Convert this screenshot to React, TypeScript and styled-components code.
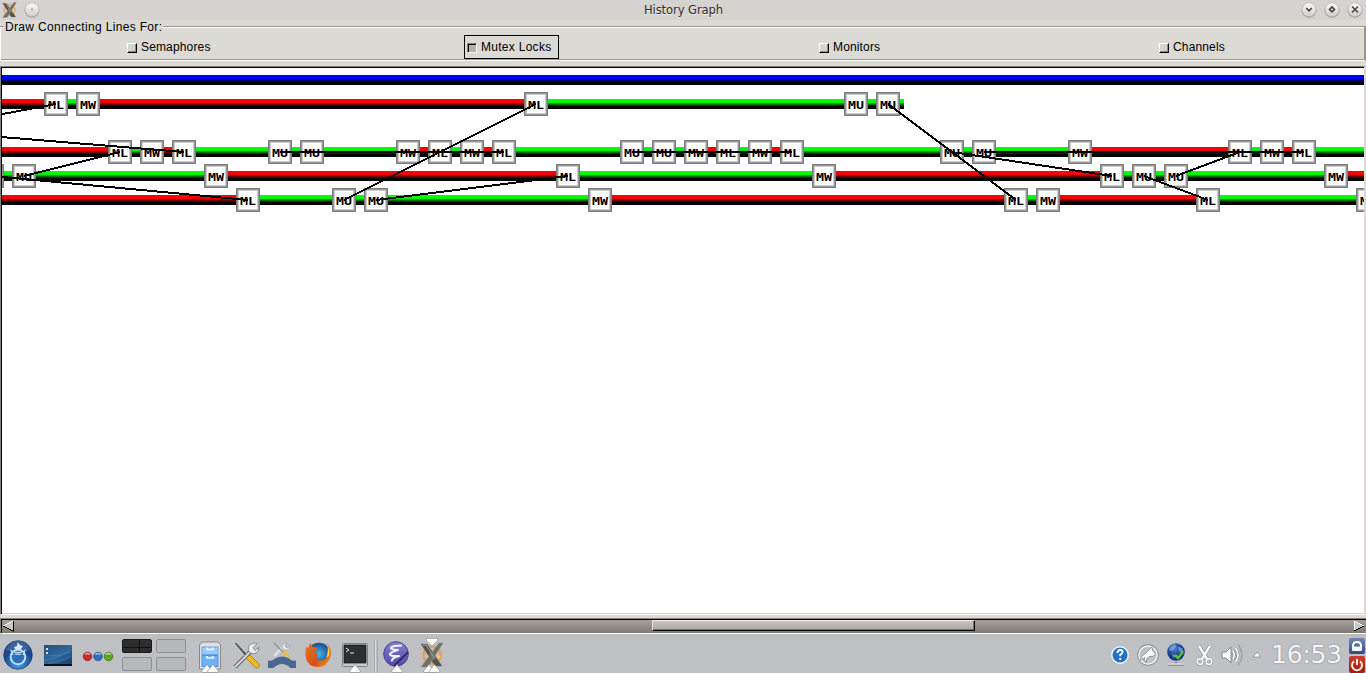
import React from "react";
import styled, { createGlobalStyle } from "styled-components";

const Global = createGlobalStyle`
  * { box-sizing: border-box; }
  html, body { margin: 0; padding: 0; overflow: hidden; background: #dbdad5; }
  svg { display: block; }
`;

const Screen = styled.div`
  width: 1366px;
  height: 673px;
  display: flex;
  flex-direction: column;
  overflow: hidden;
  background: #dbdad5;
  color: #000;
  font-family: "Liberation Sans", Arial, sans-serif;
  font-size: 12px;
`;

/* ---------- title bar ---------- */

const TitleBar = styled.header`
  height: 20px;
  flex: none;
  display: grid;
  grid-template-columns: 1fr auto 1fr;
  align-items: center;
  background: #d6d2d0;
`;

const TitleSide = styled.div<{ $end?: boolean }>`
  display: flex;
  justify-content: ${(p) => (p.$end ? "flex-end" : "flex-start")};
  gap: 7px;
  padding: ${(p) => (p.$end ? "0 3px 0 0" : "0 0 0 2px")};
`;

const TitleText = styled.h1`
  margin: 0;
  padding-left: 1px;
  font: 11.5px/20px "DejaVu Sans", sans-serif;
  letter-spacing: -0.05px;
  color: #2b2a29;
  text-shadow: 0 1px 0 #f2f0ef;
`;

/* ---------- option group ---------- */

const Options = styled.section`
  height: 46px;
  flex: none;
  display: flex;
  flex-direction: column;
`;

const Legend = styled.div`
  height: 14px;
  display: flex;
  align-items: flex-start;
  line-height: 14px;
  letter-spacing: 0.33px;
  white-space: nowrap;
`;

const Rule = styled.span<{ $w?: string }>`
  flex: ${(p) => (p.$w ? `0 0 ${p.$w}` : "1")};
  height: 2px;
  margin-top: 6px;
  background: linear-gradient(#99968e 50%, #fff 50%);
`;

const LegendText = styled.span`
  width: 159px;
  flex: none;
  padding-left: 1px;
`;

const CheckRow = styled.div`
  height: 34px;
  display: flex;
  margin-top: -7px;
  padding-top: 8px;
  border-left: 1px solid #fff;
  border-right: 2px solid #99968e;
  border-bottom: 1px solid #fff;
  box-shadow: inset 0 -1px 0 #99968e;
`;

const CheckItem = styled.label<{ $lead: number; $width: number; $active?: boolean }>`
  margin-left: ${(p) => p.$lead}px;
  width: ${(p) => p.$width}px;
  height: 24px;
  flex: none;
  display: flex;
  align-items: center;
  gap: 4px;
  padding-left: 2px;
  border: 1px solid ${(p) => (p.$active ? "#000" : "transparent")};
  letter-spacing: ${(p) => (p.$active ? 0.28 : 0.15)}px;
  white-space: nowrap;
`;

const CheckBox = styled.span<{ $on?: boolean }>`
  width: 10px;
  height: 10px;
  margin-top: 2px;
  flex: none;
  border: 1px solid;
  border-color: ${(p) => (p.$on ? "#85817a #f2f1ee #f2f1ee #85817a" : "#fff #000 #000 #fff")};
  background: ${(p) => (p.$on ? "#b6b0a5" : "#d6d4cf")};
  box-shadow: ${(p) => (p.$on ? "inset 1px 1px 0 #000" : "inset -1px -1px 0 #8d8a83")};
`;

/* ---------- graph viewport ---------- */

const Viewport = styled.main`
  height: 549px;
  flex: none;
  overflow: hidden;
  background: #fff;
  border-left: 1px solid #85827c;
  border-top: 1px solid #85827c;
  border-right: 2px solid #dbdad5;
  border-bottom: 1px solid #fff;
  box-shadow: inset 1px 1px 0 #000, inset 0 -1px 0 #d0d0cb;
  padding: 1px 0 0 1px;
`;

type Colour = "red" | "green" | "blue";
type Mark = [number, string];
interface Thread {
  y: number;
  bars: [number, number, Colour][];
  marks: Mark[];
}

const END = 1364;

const threads: Thread[] = [
  { y: 80, bars: [[0, END, "blue"]], marks: [] },
  {
    y: 104,
    bars: [[0, 56, "red"], [56, 88, "green"], [88, 536, "red"], [536, 904, "green"]],
    marks: [[56, "ML"], [88, "MW"], [536, "ML"], [856, "MU"], [888, "MU"]],
  },
  {
    y: 152,
    bars: [
      [0, 120, "red"], [120, 152, "green"], [152, 184, "red"], [184, 408, "green"],
      [408, 440, "red"], [440, 472, "green"], [472, 504, "red"], [504, 696, "green"],
      [696, 728, "red"], [728, 760, "green"], [760, 792, "red"], [792, 1080, "green"],
      [1080, 1240, "red"], [1240, 1272, "green"], [1272, 1304, "red"], [1304, END, "green"],
    ],
    marks: [
      [120, "ML"], [152, "MW"], [184, "ML"], [280, "MU"], [312, "MU"], [408, "MW"],
      [440, "ML"], [472, "MW"], [504, "ML"], [632, "MU"], [664, "MU"], [696, "MW"],
      [728, "ML"], [760, "MW"], [792, "ML"], [952, "MU"], [984, "MU"], [1080, "MW"],
      [1240, "ML"], [1272, "MW"], [1304, "ML"],
    ],
  },
  {
    y: 176,
    bars: [
      [0, 216, "green"], [216, 568, "red"], [568, 824, "green"], [824, 1112, "red"],
      [1112, 1336, "green"], [1336, END, "red"],
    ],
    marks: [
      [-8, ""], [24, "MU"], [216, "MW"], [568, "ML"], [824, "MW"], [1112, "ML"],
      [1144, "MU"], [1176, "MU"], [1336, "MW"],
    ],
  },
  {
    y: 200,
    bars: [
      [0, 248, "red"], [248, 600, "green"], [600, 1016, "red"], [1016, 1048, "green"],
      [1048, 1208, "red"], [1208, END, "green"],
    ],
    marks: [
      [248, "ML"], [344, "MU"], [376, "MU"], [600, "MW"], [1016, "ML"], [1048, "MW"],
      [1208, "ML"], [1368, "MU"],
    ],
  },
];

const links: [number, number, number, number][] = [
  [-40, 122, 56, 104],
  [-72, 131, 184, 152],
  [24, 176, 120, 152],
  [-8, 176, 248, 200],
  [280, 152, 504, 152],
  [344, 200, 536, 104],
  [376, 200, 568, 176],
  [632, 152, 792, 152],
  [888, 104, 1016, 200],
  [952, 152, 1112, 176],
  [984, 152, 1304, 152],
  [1144, 176, 1208, 200],
  [1176, 176, 1240, 152],
];

const MarkText = styled.text`
  font-family: "DejaVu Sans Mono", monospace;
  font-weight: 700;
  font-size: 10px;
  fill: #000;
`;

const shades: [string, number][] = [
  ["0%", 1], ["30%", 1], ["30%", 0.92], ["40%", 0.92], ["40%", 0.66], ["50%", 0.66],
  ["50%", 0.44], ["60%", 0.44], ["60%", 0.2], ["70%", 0.2], ["70%", 0], ["100%", 0],
];

const tint = (c: Colour, k: number) => {
  const v = Math.round(255 * k);
  return c === "red" ? `rgb(${v},0,0)` : c === "green" ? `rgb(0,${v},0)` : `rgb(0,0,${v})`;
};

const HistoryGraph = () => (
  <svg width="1362" height="545" viewBox="2 68 1362 545">
    <defs>
      {(["red", "green", "blue"] as Colour[]).map((c) => (
        <linearGradient key={c} id={`bar-${c}`} x1="0" y1="0" x2="0" y2="1">
          {shades.map(([o, k], i) => (
            <stop key={i} offset={o} stopColor={tint(c, k)} />
          ))}
        </linearGradient>
      ))}
    </defs>
    {threads.map((t) => (
      <g key={t.y} shapeRendering="crispEdges">
        {t.bars.map(([a, b, c]) => (
          <rect key={a} x={a} y={t.y - 5} width={b - a} height="10" fill={`url(#bar-${c})`} />
        ))}
        {t.marks.map(([x, label]) => (
          <g key={x}>
            <rect x={x - 12} y={t.y - 12} width="24" height="24" fill="#7c7c7c" />
            <rect x={x - 11} y={t.y - 11} width="22" height="22" fill="#999" />
            <rect x={x - 10} y={t.y - 10} width="20" height="20" fill="#cbcbcb" />
            <rect x={x - 9} y={t.y - 9} width="18" height="18" fill="#fff" />
            {label && (
              <MarkText x={x - 8} y={t.y + 5} textLength="16" lengthAdjust="spacingAndGlyphs">
                {label}
              </MarkText>
            )}
          </g>
        ))}
      </g>
    ))}
    <g stroke="#000" strokeWidth="2" shapeRendering="crispEdges">
      {links.map(([x1, y1, x2, y2]) => (
        <line key={`${x1}-${y1}`} x1={x1} y1={y1} x2={x2} y2={y2} />
      ))}
    </g>
  </svg>
);

/* ---------- scroll bar ---------- */

const ScrollBar = styled.div`
  height: 16px;
  margin-top: 3px;
  flex: none;
  display: flex;
  justify-content: space-between;
  border-top: 1px solid #85827c;
  border-bottom: 1px solid #fff;
  border-left: 1px solid #85827c;
  box-shadow: inset 0 1px 0 #000, inset 1px 0 0 #000;
  background: linear-gradient(#aaa49e, #7e7a72);
  padding-top: 1px;
`;

const Thumb = styled.div`
  width: 323px;
  height: 11px;
  margin-left: 637px;
  margin-right: auto;
  background: linear-gradient(#c9c6c3, #a7a6a1);
  border: 1px solid;
  border-color: #f1ecee #000 #000 #ddd;
  box-shadow: inset -1px -1px 0 #75766f;
`;

/* ---------- task bar ---------- */

const TaskBar = styled.footer`
  height: 39px;
  flex: none;
  display: flex;
  justify-content: space-between;
  background: linear-gradient(#b9bbbc, #bec0c3 5px, #c0c1c5);
`;

const TaskGroup = styled.div`
  display: flex;
  flex: none;
`;

const Glyph = styled.svg<{ $gap?: number }>`
  height: 39px;
  flex: none;
  margin-left: ${(p) => p.$gap ?? 0}px;
  overflow: visible;
`;

const Pager = styled.div`
  display: grid;
  grid-template-columns: 30px 30px;
  grid-template-rows: 14px 14px;
  gap: 4px;
  margin: 5px 0 0 9px;
`;

const Desk = styled.span<{ $current?: boolean }>`
  border: 1px solid ${(p) => (p.$current ? "#1a1a1a" : "#8c8e90")};
  border-radius: 2px;
  background: ${(p) =>
    p.$current
      ? "linear-gradient(#111,#111) 16px 0/1px 100% no-repeat, linear-gradient(#111,#111) 0 7px/100% 1px no-repeat, #2d2d2d"
      : "#b7b9bb"};
`;

const Clock = styled.time`
  width: 78px;
  margin-left: 9px;
  font: 25px/41px "DejaVu Sans", sans-serif;
  letter-spacing: -0.25px;
  color: #f6f6f6;
  text-shadow: 0 0 2px #85878a, 0 0 1px #97999c;
`;

const SessionButtons = styled.div`
  width: 17px;
  display: flex;
  flex-direction: column;
  gap: 2px;
  padding-top: 4px;
`;

const SessionButton = styled.span<{ $red?: boolean }>`
  height: ${(p) => (p.$red ? 17 : 16)}px;
  width: 16px;
  border-radius: 2px;
  background: ${(p) =>
    p.$red ? "linear-gradient(#c8402f, #a5180d)" : "linear-gradient(#7289b0, #2c4d82)"};
`;

const Window = ({ x, y }: { x: number; y: number }) => (
  <path d={`M${x} ${y}l5.5 -6.5 5.5 6.5q0 1.5-1.5 1.5h-8q-1.5 0-1.5-1.5z`} fill="#fff" stroke="#8b8b8b" strokeWidth=".7" />
);

const XLogo = () => (
  <>
    <circle cx="12" cy="12" r="8.5" fill="none" stroke="#ef9440" strokeWidth="2.5" opacity=".75" />
    <path d="M17 11l4 3-4 3" fill="#f5cf55" />
    <path d="M1 1h6l15 22h-7z" fill="#56534c" stroke="#75716a" strokeWidth=".5" />
    <path d="M19 0h4L8 24H1z" fill="#746f65" stroke="#999286" strokeWidth=".6" />
    <path d="M3 2h3l9 14" fill="none" stroke="#aaa69b" />
  </>
);

const WinButton = ({ kind }: { kind: "dot" | "down" | "max" | "close" }) => (
  <svg width="16" height="18" viewBox="0 0 16 18">
    <circle cx="8" cy="9.3" r="7.5" fill="#a5a29f" />
    <circle cx="8" cy="8.700" r="6.900" fill="url(#btnFace)" stroke="#b8b5b2" strokeWidth=".6" />
    {kind === "dot" && <circle cx="8" cy="8.500" r=".9" fill="#8d8b88" />}
    {kind === "down" && <path d="M5.200 7l2.800 2.800L10.800 7" fill="none" stroke="#444" strokeWidth="1.600" />}
    {kind === "max" && <path d="M8 5.900l2.500 2.500L8 10.900 5.500 8.400z" fill="none" stroke="#444" strokeWidth="1.500" />}
    {kind === "close" && <path d="M5 5.500l6 6M11 5.500l-6 6" stroke="#444" strokeWidth="1.500" />}
  </svg>
);

const Launchers = () => (
  <TaskGroup>
    <Glyph width="30" viewBox="0 0 30 39" $gap={3}>
      <circle cx="15" cy="21" r="14.3" fill="url(#menuBlue)" stroke="#1a3972" strokeWidth=".7" />
      <path d="M3 16q3-9 12-9t12 9q-12 4-24 0z" fill="#fff" opacity=".14" />
      <circle cx="15" cy="23" r="7.300" fill="#2c6fb9" stroke="#bfe0f8" strokeWidth="2" />
      <path d="M7 15l4 3h8l4-3-2 6H9z" fill="#bfe0f8" />
      <path d="M10 18q5 3 10 0v3q-5-2-10 0z" fill="#2c6fb9" />
      <path d="M11 13l3-1 .5-4L17 11l3 1-2 3h-6z" fill="#d4ebfa" />
    </Glyph>
    <Glyph width="28" viewBox="0 0 28 39" $gap={11}>
      <rect y="11" width="28" height="21" fill="url(#deskBlue)" />
      <path d="M1 26Q14 25 27 15M1 22q13 1 26-4M5 29q14-2 22-7" fill="none" stroke="#5487b8" strokeWidth=".6" />
      <path d="M2 14h2v2H2zM2 18h2v2H2z" fill="#d7e5ce" />
      <rect y="30" width="28" height="2" fill="#0b1320" />
    </Glyph>
    <Glyph width="30" viewBox="0 0 30 39" $gap={11}>
      <circle cx="4.5" cy="22.5" r="4.3" fill="#c72c30" stroke="#8a1c20" strokeWidth=".7" />
      <circle cx="15" cy="22.5" r="4.3" fill="#2e6dc1" stroke="#1c4888" strokeWidth=".7" />
      <circle cx="25.5" cy="22.5" r="4.3" fill="#5da51c" stroke="#3b7410" strokeWidth=".7" />
      <path d="M2 20.5q2.5-2 5 0M12.500 20.500q2.500-2 5 0M23 20.500q2.500-2 5 0" fill="none" stroke="#fff" strokeOpacity=".6" strokeWidth="1.500" />
    </Glyph>
    <Pager>
      <Desk $current />
      <Desk />
      <Desk />
      <Desk />
    </Pager>
    <Glyph width="22" viewBox="0 0 22 39" $gap={13}>
      <path d="M3 8h16l2.500 3v24H.5V11z" fill="#dfe1e3" stroke="#85878a" />
      <rect x="3" y="13" width="16" height="7.500" fill="#9bcbfc" stroke="#62a6ea" />
      <rect x="3" y="21.500" width="16" height="11" fill="#70b2fa" stroke="#4d91e0" />
      <path d="M8 13.500v2h6v-2M8 22v2h6v-2" fill="none" stroke="#f1f5f8" strokeWidth="1.700" />
      <Window x={2.5} y={37} />
      <Window x={8.5} y={37} />
    </Glyph>
    <Glyph width="27" viewBox="0 0 27 39" $gap={12}>
      <path d="M2 33L18 17" stroke="#626467" strokeWidth="4" />
      <path d="M2 33L18 17" stroke="#d5d7d8" strokeWidth="2" />
      <path d="M16 18q-2-6 2-8 4-2 6-.5l-4 4 2 3 4-3q0 5-4 6-3 1-6-1.500z" fill="#eceded" stroke="#75777a" strokeWidth=".8" />
      <path d="M1 9l2-1 11 12-2 2z" fill="#505254" stroke="#eee" strokeWidth=".6" />
      <path d="M13 24l4-3 9 9q1 4-3 4z" fill="#f0bb1e" stroke="#a47607" strokeWidth=".8" />
    </Glyph>
    <Glyph width="28" viewBox="0 0 28 39" $gap={8}>
      <path d="M6 22L15 13" stroke="#dfe0e1" strokeWidth="2.500" />
      <path d="M14 13q0-4 5-4l-2 3 2 2 3-2q0 5-6 4z" fill="#e7e8e9" stroke="#85878a" strokeWidth=".5" />
      <path d="M6 9l9 9" stroke="#8d8f91" strokeWidth="1.300" />
      <path d="M14 18l3-1 5 5-2 2z" fill="#efbd2b" />
      <path d="M0 26.500q4 1 7-2 7-4 14 0 3 3 7 2v7.500h-5.500q-8.500-8-17 0H0z" fill="#4a6691" />
    </Glyph>
    <Glyph width="26" viewBox="0 0 26 39" $gap={9}>
      <circle cx="14" cy="20" r="11.300" fill="url(#foxBlue)" />
      <path d="M1 13l2 1 2-5 3 4 5 1-4 4 4 2q-3 4 0 6 6 2 10-4 2-8-2-13 7 6 4 15-4 10-13 9Q-2 32 1 13z" fill="url(#foxFire)" />
      <path d="M22 10q4 6 2 12l-3 2q3-7 1-14z" fill="#f9cd39" />
    </Glyph>
    <Glyph width="26" viewBox="0 0 26 39" $gap={11}>
      <rect x=".5" y="9.500" width="25" height="23" rx="1" fill="#c7c9ca" stroke="#808284" />
      <rect x="2" y="11" width="22" height="18" fill="#2d3031" stroke="#111" strokeWidth=".7" />
      <path d="M4 14l3 2-3 2M8 19h4" fill="none" stroke="#e8e8e8" />
      <Window x={7.5} y={37} />
    </Glyph>
    <Glyph width="4" viewBox="0 0 4 39" $gap={6}>
      <path d="M.5 6v33M3.500 6v33" stroke="#a7a9ab" />
      <path d="M1.500 6v33" stroke="#d9dadc" />
    </Glyph>
    <Glyph width="26" viewBox="0 0 26 39" $gap={5}>
      <circle cx="13" cy="20" r="12.300" fill="url(#emacs)" stroke="#45409a" />
      <path d="M19 11.500q-9 0-11 2-1 2 7 2.500-8 2-8 4.500 1 2 9 1.500-8 2-7 5.500" fill="none" stroke="#f3f2ff" strokeWidth="2.100" strokeLinejoin="round" />
      <path d="M25 18L11 32" stroke="#262245" strokeWidth="1.600" />
      <Window x={8.5} y={37} />
    </Glyph>
    <Glyph width="26" viewBox="0 0 26 39" $gap={10}>
      <g transform="translate(1 9)"><XLogo /></g>
      <path d="M7.500 4.500h11v2L13 12 7.500 6.500z" fill="#fff" stroke="#8b8b8b" strokeWidth=".6" />
      <Window x={4.500} y={37} />
      <Window x={10} y={37} />
    </Glyph>
  </TaskGroup>
);

const Tray = () => (
  <TaskGroup>
    <Glyph width="18" viewBox="0 0 18 39">
      <circle cx="9" cy="21" r="8.200" fill="#2370c4" stroke="#f3f5f8" strokeWidth="1.400" />
      <path d="M6.500 19q0-3 2.700-3 2.500 0 2.300 2.200-.2 1.300-2.300 2.600v1.500M9.200 24v2" fill="none" stroke="#fff" strokeWidth="1.900" />
    </Glyph>
    <Glyph width="22" viewBox="0 0 22 39" $gap={8}>
      <circle cx="11" cy="21" r="10" fill="#bfc1c3" stroke="#85878a" strokeWidth="1.500" />
      <circle cx="11" cy="21" r="9.200" fill="none" stroke="#fafafa" strokeWidth="1.300" />
      <path d="M3 26q1-4 6-7l6-6 .5 3.500 3 3.500-1.500 2-5 .5q-3 2-3 6-3-3-1-5z" fill="#fff" stroke="#737578" strokeWidth=".7" />
    </Glyph>
    <Glyph width="20" viewBox="0 0 20 39" $gap={7}>
      <circle cx="10" cy="18" r="8.800" fill="url(#globe)" />
      <path d="M5 12l4-2 1 3-4 4-3-1zM12 13l4 1 2 4-4 1zM6 20l3 1-1 4z" fill="#7aa2dc" opacity=".8" />
      <path d="M9 21l3 3 5-6" fill="none" stroke="#55c52b" strokeWidth="2.500" />
      <path d="M2 30.500h16M10 28v2" stroke="#808386" strokeWidth="2.500" />
      <path d="M2 30h16" stroke="#f5f5f5" strokeWidth="1.300" />
    </Glyph>
    <Glyph width="17" viewBox="0 0 17 39" $gap={10}>
      <g fill="none">
        <path d="M3 12l8 13M14 12L6 25" stroke="#85878a" strokeWidth="3.600" />
        <circle cx="4" cy="27.500" r="2.800" stroke="#85878a" strokeWidth="2.800" />
        <circle cx="13" cy="27.500" r="2.800" stroke="#85878a" strokeWidth="2.800" />
        <path d="M3 12l8 13M14 12L6 25" stroke="#fafafa" strokeWidth="2.400" />
        <circle cx="4" cy="27.500" r="2.800" stroke="#fafafa" strokeWidth="1.700" />
        <circle cx="13" cy="27.500" r="2.800" stroke="#fafafa" strokeWidth="1.700" />
      </g>
    </Glyph>
    <Glyph width="22" viewBox="0 0 22 39" $gap={8}>
      <path d="M1 18h4l5-5v16l-5-5H1z" fill="#fafafa" stroke="#85878a" />
      <path d="M12 17q2.500 4 0 8M14.500 14q5 7 0 14" fill="none" stroke="#85878a" strokeWidth="3" />
      <path d="M12 17q2.500 4 0 8M14.500 14q5 7 0 14" fill="none" stroke="#fafafa" strokeWidth="1.700" />
      <path d="M17.500 11q7 10 0 20" fill="none" stroke="#a0a2a4" strokeWidth="1.500" />
    </Glyph>
    <Glyph width="10" viewBox="0 0 10 39" $gap={9}>
      <path d="M1 23l4-5 4 5z" fill="#fafafa" stroke="#8b8d8f" strokeWidth=".8" />
    </Glyph>
    <Clock>16:53</Clock>
    <SessionButtons>
      <SessionButton>
        <svg width="16" height="16" viewBox="0 0 16 16">
          <path d="M4 9V8q0-4 4-4t4 4v1" fill="none" stroke="#fff" strokeWidth="2" />
          <rect x="3" y="8.500" width="10" height="4.500" rx="1" fill="#f3f5fa" />
        </svg>
      </SessionButton>
      <SessionButton $red>
        <svg width="16" height="17" viewBox="0 0 16 17">
          <path d="M5 5.200a5 5 0 1 0 6 0M8 3v6" fill="none" stroke="#fbe9e6" strokeWidth="2" />
        </svg>
      </SessionButton>
    </SessionButtons>
  </TaskGroup>
);

const Paints = () => (
  <defs>
    <linearGradient id="btnFace" x1="0" y1="0" x2="0" y2="1">
      <stop offset="0" stopColor="#fafafa" />
      <stop offset="1" stopColor="#d1cecb" />
    </linearGradient>
    <radialGradient id="menuBlue" cy=".8">
      <stop offset="0" stopColor="#4ba3e2" />
      <stop offset="1" stopColor="#1c478e" />
    </radialGradient>
    <linearGradient id="deskBlue" x1="0" y1="0" x2="1" y2="1">
      <stop offset="0" stopColor="#23507c" />
      <stop offset=".5" stopColor="#2d669e" />
      <stop offset="1" stopColor="#173d6c" />
    </linearGradient>
    <radialGradient id="foxBlue">
      <stop offset="0" stopColor="#48b4df" />
      <stop offset="1" stopColor="#1a4b91" />
    </radialGradient>
    <linearGradient id="foxFire" x1="0" y1="0" x2="1" y2="1">
      <stop offset="0" stopColor="#e57a22" />
      <stop offset=".6" stopColor="#dd4d16" />
      <stop offset="1" stopColor="#f2a52c" />
    </linearGradient>
    <linearGradient id="emacs" x1="0" y1="0" x2="0" y2="1">
      <stop offset="0" stopColor="#8580cf" />
      <stop offset="1" stopColor="#5049aa" />
    </linearGradient>
    <radialGradient id="globe" cx=".4" cy=".3">
      <stop offset="0" stopColor="#4f83d2" />
      <stop offset="1" stopColor="#173785" />
    </radialGradient>
  </defs>
);

export default function App() {
  return (
    <Screen>
      <Global />
      <TitleBar>
        <TitleSide>
          <svg width="15" height="18" viewBox="0 -1 24 26">
            <Paints />
            <XLogo />
          </svg>
          <WinButton kind="dot" />
        </TitleSide>
        <TitleText>History Graph</TitleText>
        <TitleSide $end>
          <WinButton kind="down" />
          <WinButton kind="max" />
          <WinButton kind="close" />
        </TitleSide>
      </TitleBar>
      <Options>
        <Legend>
          <Rule $w="4px" />
          <LegendText>Draw Connecting Lines For:</LegendText>
          <Rule />
        </Legend>
        <CheckRow>
          <CheckItem $lead={123} $width={95}><CheckBox />Semaphores</CheckItem>
          <CheckItem $lead={245} $width={95} $active><CheckBox $on />Mutex Locks</CheckItem>
          <CheckItem $lead={257} $width={80}><CheckBox />Monitors</CheckItem>
          <CheckItem $lead={260} $width={80}><CheckBox />Channels</CheckItem>
        </CheckRow>
      </Options>
      <Viewport><HistoryGraph /></Viewport>
      <ScrollBar>
        <svg width="14" height="13" viewBox="0 0 14 13" shapeRendering="crispEdges">
          <path d="M2 6L12 1v10z" fill="#c8c6c2" />
          <path d="M2 6l10-5" stroke="#fff" />
          <path d="M2 6l10 5V1" fill="none" stroke="#000" />
        </svg>
        <Thumb />
        <svg width="13" height="13" viewBox="0 0 13 13" shapeRendering="crispEdges">
          <path d="M1 1v10l10-5z" fill="#c8c6c2" />
          <path d="M1 11V1l10 5" fill="none" stroke="#fff" />
          <path d="M1 11l10-5" stroke="#000" />
        </svg>
      </ScrollBar>
      <TaskBar>
        <Launchers />
        <Tray />
      </TaskBar>
    </Screen>
  );
}
